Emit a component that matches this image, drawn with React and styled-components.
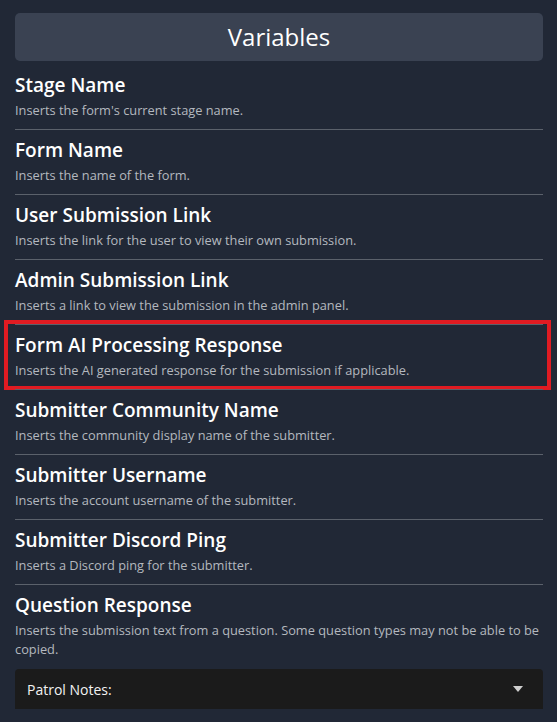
import React from 'react'
import styled, { createGlobalStyle } from 'styled-components'

const GlobalStyle = createGlobalStyle`
    html, body {
        margin: 0;
        padding: 0;
        background-color: #212836;
        font-family: "Open Sans", "Noto Sans", sans-serif;
    }
`

const Container = styled.div`
    width: 557px;
    height: 722px;
    overflow: hidden;
    background-color: #212836;
    padding: 13px 14px 0 15px;
    box-sizing: border-box;
`
const Header = styled.div`
    height: 48px;
    background-color: #3a4252;
    border-radius: 5px;
    display: flex;
    align-items: center;
    justify-content: center;
    margin-bottom: 3px;
`
const Title = styled.h1`
    margin: 0;
    color: #ffffff;
    font-size: 24px;
    font-weight: 400;
    line-height: 1;
`
const List = styled.div`
    display: flex;
    flex-direction: column;
`
const Row = styled.div`
    position: relative;
    padding: 8px 0 9px;
    border-top: 1px solid ${props => props.first ? 'transparent' : '#5b616b'};
`
const Name = styled.div`
    color: #ffffff;
    font-size: 19px;
    font-weight: 600;
    line-height: 24px;
    margin-bottom: 4px;
`
const Desc = styled.div`
    color: #b4b8bf;
    font-size: 12.8px;
    line-height: 19px;
`
const Highlight = styled.div`
    position: absolute;
    top: -5px;
    left: -11px;
    right: -8px;
    bottom: -1px;
    border: 4px solid #e01b22;
    pointer-events: none;
`
const Dropdown = styled.div`
    margin-top: 1px;
    height: 40px;
    background-color: #1b1b1b;
    border-radius: 4px 4px 0 0;
    display: flex;
    align-items: center;
    justify-content: space-between;
    padding: 0 20px 0 12px;
`
const DropLabel = styled.span`
    color: #f2f2f2;
    font-size: 14px;
`
const Caret = styled.span`
    width: 0;
    height: 0;
    border-left: 5px solid transparent;
    border-right: 5px solid transparent;
    border-top: 6px solid #cfcfcf;
`

const variables = [
    { name: 'Stage Name', desc: "Inserts the form's current stage name." },
    { name: 'Form Name', desc: 'Inserts the name of the form.' },
    { name: 'User Submission Link', desc: 'Inserts the link for the user to view their own submission.' },
    { name: 'Admin Submission Link', desc: 'Inserts a link to view the submission in the admin panel.' },
    { name: 'Form AI Processing Response', desc: 'Inserts the AI generated response for the submission if applicable.', highlight: true },
    { name: 'Submitter Community Name', desc: 'Inserts the community display name of the submitter.' },
    { name: 'Submitter Username', desc: 'Inserts the account username of the submitter.' },
    { name: 'Submitter Discord Ping', desc: 'Inserts a Discord ping for the submitter.' },
    { name: 'Question Response', desc: 'Inserts the submission text from a question. Some question types may not be able to be copied.' },
]

const App = () => {
  return (
    <Container>
        <GlobalStyle />
        <Header>
            <Title>Variables</Title>
        </Header>
        <List>
            {variables.map((v, i) => (
                <Row key={v.name} first={i === 0}>
                    <Name>{v.name}</Name>
                    <Desc>{v.desc}</Desc>
                    {v.highlight ? <Highlight /> : null}
                </Row>
            ))}
        </List>
        <Dropdown>
            <DropLabel>Patrol Notes:</DropLabel>
            <Caret />
        </Dropdown>
    </Container>
  )
}

export default App
